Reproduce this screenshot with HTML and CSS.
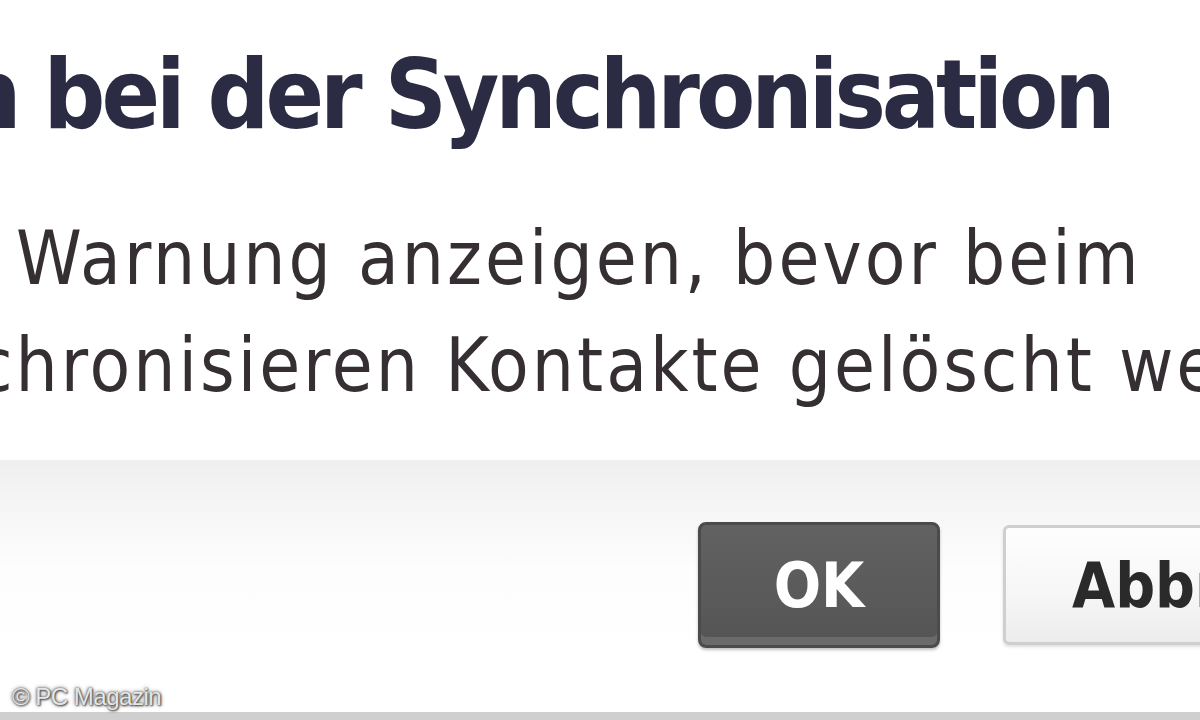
FILE: index.html
```html
<!DOCTYPE html>
<html lang="de">
<head>
<meta charset="utf-8">
<title>Synchronisation</title>
<link rel="stylesheet" href="styles.css">
</head>
<body>
<div class="dialog">
  <div class="content">
    <h1 class="title">n bei der Synchronisation</h1>
    <p class="line line-1">Warnung anzeigen, bevor beim</p>
    <p class="line line-2">chronisieren Kontakte gelöscht werden</p>
  </div>
  <div class="footer">
    <button class="btn btn-ok">OK</button>
    <button class="btn btn-cancel">Abbrechen</button>
  </div>
  <div class="watermark">© PC Magazin</div>
</div>
</body>
</html>
```
FILE: styles.css
```css
html, body {
  margin: 0;
  padding: 0;
  width: 1200px;
  height: 720px;
  overflow: hidden;
  background: #ffffff;
}

.dialog {
  position: relative;
  width: 1200px;
  height: 720px;
  display: flex;
  flex-direction: column;
  overflow: hidden;
}

.content {
  height: 460px;
  background: #ffffff;
  display: flex;
  flex-direction: column;
}

.title {
  margin: 30px 0 0 -40px;
  font-family: "DejaVu Sans Condensed", "DejaVu Sans", sans-serif;
  font-weight: bold;
  font-size: 96px;
  line-height: 130px;
  letter-spacing: -4px;
  color: #2b2c44;
  white-space: nowrap;
}

.line {
  margin: 0;
  font-family: "DejaVu Sans Condensed", "DejaVu Sans", sans-serif;
  font-size: 74px;
  line-height: 107px;
  letter-spacing: 3px;
  color: #352f33;
  white-space: nowrap;
}

.line-1 {
  margin-top: 45px;
  margin-left: 16px;
}

.line-2 {
  margin-left: -24px;
}

.footer {
  flex: 1;
  display: flex;
  align-items: center;
  padding-left: 698px;
  gap: 63px;
  background: linear-gradient(to bottom, #efefef 0px, #f6f6f6 50px, #fdfdfd 110px, #ffffff 200px);
  border-bottom: 8px solid #cfcfcf;
  padding-bottom: 2px;
}

.btn {
  flex-shrink: 0;
  font-family: "DejaVu Sans Condensed", "DejaVu Sans", sans-serif;
  font-weight: bold;
  font-size: 62px;
  border-radius: 8px;
  padding: 0;
}

.btn-ok {
  width: 242px;
  height: 126px;
  color: #ffffff;
  background: linear-gradient(to bottom, #616161 0%, #5a5a5a 60%, #545454 100%);
  border: 3px solid #4b4b4b;
  box-shadow: inset 0 -8px 0 #6a6a6a, 0 2px 3px rgba(0,0,0,0.25);
}

.btn-cancel {
  width: 360px;
  height: 120px;
  color: #2a2a2a;
  text-align: left;
  padding-left: 66px;
  background: linear-gradient(to bottom, #fefefe 0%, #f6f6f6 60%, #ececec 100%);
  border: 3px solid #cfcfcf;
  border-radius: 6px;
  box-shadow: 0 2px 3px rgba(0,0,0,0.12);
}

.watermark {
  position: absolute;
  left: 12px;
  bottom: 9px;
  font-family: "Liberation Sans", Arial, sans-serif;
  font-size: 24px;
  letter-spacing: -0.5px;
  color: #e6e6e6;
  text-shadow: 0 0 2px #555555, 0 0 4px #666666, 1px 1px 2px #444444;
}
```
